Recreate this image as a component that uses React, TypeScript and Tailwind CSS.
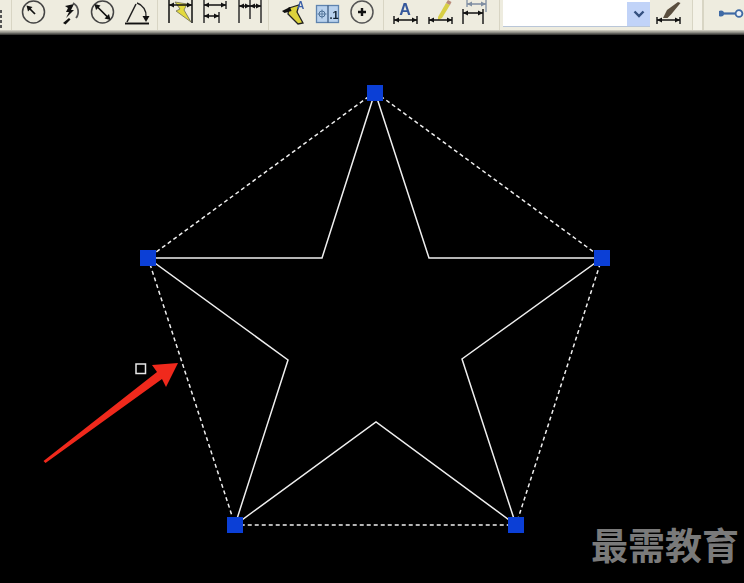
import type { ReactNode } from 'react';

// Each icon uses page x coordinates inside its viewBox, so the drawings can be read straight off the screenshot.
function Icon({ x, w, children }: { x: number; w: number; children: ReactNode }) {
  return (
    <svg width={w} height={30} viewBox={`${x} 0 ${w} 30`} className="shrink-0 blur-[0.35px]" fill="none">
      {children}
    </svg>
  );
}

function Sep({ width = 'w-[3px]' }: { width?: string }) {
  return <div className={`${width} h-full shrink-0 border-l border-[#d8d5c4] border-r-white`} />;
}

function Dim({ x1, x2, y, color = '#111' }: { x1: number; x2: number; y: number; color?: string }) {
  return (
    <g>
      <path d={`M${x1} ${y}H${x2}`} stroke={color} strokeWidth="1.5" />
      <path d={`M${x1} ${y}l5 -2.5v5zM${x2} ${y}l-5 -2.5v5z`} fill={color} />
    </g>
  );
}

function CanvasDrawing() {
  const star = '375,92 429,258 602,258 462,359 516,525 376,422 235,525 288,360 148,258 322,258';
  const pentagon = '375,92 602,258 516,525 235,525 148,258';
  const handles = [
    [375, 93],
    [602, 258],
    [516, 525],
    [235, 525],
    [148, 258],
  ];
  return (
    <svg width={744} height={548} viewBox="0 35 744 548" className="block">
      <polygon points={pentagon} fill="none" stroke="#efefef" strokeWidth="1.5" strokeDasharray="4 3" />
      <polygon points={star} fill="none" stroke="#efefef" strokeWidth="1.5" />
      {handles.map(([x, y]) => (
        <rect key={`${x}-${y}`} x={x - 8} y={y - 8} width={16} height={16} fill="#0b3fd6" />
      ))}
      <rect x={136} y={364} width={9.5} height={9.5} fill="none" stroke="#e8e8e8" strokeWidth="1.5" />
      <polygon points="43.5,461 157,372 152,365 178,363 166,387 162,379 45.5,463" fill="#f0291c" />
    </svg>
  );
}

export default function App() {
  return (
    <div className="flex h-[583px] w-[744px] flex-col overflow-hidden bg-black font-['Liberation_Sans',sans-serif]">
      <div className="flex h-[30px] shrink-0 bg-[#eeecdf]">
        <div className="flex h-full w-[11px] shrink-0 flex-col gap-[2px] pt-[10px]">
          <div className="h-[3px] w-[2px] bg-[#555]" />
          <div className="h-[3px] w-[2px] bg-[#555]" />
          <div className="h-[3px] w-[2px] bg-[#555]" />
          <div className="h-[3px] w-[2px] bg-[#555]" />
        </div>
        <Sep />
        <Icon x={14} w={39}>
          <circle cx={33.5} cy={12} r={11} stroke="#444" strokeWidth="1.5" />
          <path d="M35 14L29 8" stroke="#111" strokeWidth="1.7" />
          <path d="M26.5 5.5l6 1.5-4.5 4.5z" fill="#111" />
        </Icon>
        <Icon x={53} w={33}>
          <path d="M73 3a10 10 0 0 1 3 15" stroke="#555" strokeWidth="1.8" />
          <path d="M65 6l9-2-3 6 3 0-8 8 3-6-3 0 2-4z" fill="#111" />
          <path d="M63 23l6-5 1.5 1.5-5 5z" fill="#111" />
        </Icon>
        <Icon x={86} w={34}>
          <circle cx={102.5} cy={12} r={11} stroke="#444" strokeWidth="1.5" />
          <path d="M96 5.5L109 18.5" stroke="#111" strokeWidth="1.7" />
          <path d="M94.5 4l6 1.5-4.5 4.5zM110.5 20l-6-1.5 4.5-4.5z" fill="#111" />
        </Icon>
        <Icon x={120} w={37}>
          <path d="M125 23.5H149" stroke="#111" strokeWidth="1.9" />
          <path d="M127 22L136 4" stroke="#222" strokeWidth="1.5" />
          <path d="M137 3a13 13 0 0 1 9 14" stroke="#222" strokeWidth="1.4" />
          <path d="M146 22l-3.5-6h7z" fill="#111" />
        </Icon>
        <Sep />
        <Icon x={160} w={37}>
          <path d="M169 0V23M192 0V23" stroke="#111" strokeWidth="1.5" />
          <path d="M175 2L187 4L184 10L191 22L176 11L180 9z" fill="#e3da3e" stroke="#6d6d55" strokeWidth="0.8" />
          <Dim x1={169} x2={192} y={5} />
        </Icon>
        <Icon x={197} w={35}>
          <path d="M204 0V23M226 1V9M219 12V23" stroke="#222" strokeWidth="1.4" />
          <Dim x1={204} x2={226} y={5} />
          <Dim x1={204} x2={219} y={16} />
        </Icon>
        <Icon x={232} w={36}>
          <path d="M239 0V23M250 0V19M261 0V23" stroke="#222" strokeWidth="1.4" />
          <Dim x1={239} x2={250} y={6} />
          <Dim x1={250} x2={261} y={6} />
        </Icon>
        <Sep width="w-[4px]" />
        <Icon x={272} w={39}>
          <path d="M289 8L299 5L297 12L303 23L298 24L288 14z" fill="#dcd23c" stroke="#222" strokeWidth="1.3" />
          <path d="M282 11l8-4 1.5 4-7 2z" fill="#111" />
          <text x={297} y={9} fontSize="10" fontWeight="700" fill="#3b5fa8" fontFamily="Liberation Sans">
            A
          </text>
        </Icon>
        <Icon x={311} w={34}>
          <rect x={316.5} y={5.5} width={22} height={17} fill="#b9d2ee" stroke="#5f84af" strokeWidth="1.3" />
          <path d="M328 5.5V22.5" stroke="#33527a" strokeWidth="1.2" />
          <circle cx={322} cy={14} r={3} stroke="#4d7096" />
          <path d="M322 9.5V18.5M317.5 14H326.5" stroke="#4d7096" strokeWidth="0.8" />
          <text x={329.5} y={19} fontSize="11" fontWeight="700" fill="#123" fontFamily="Liberation Sans">
            .1
          </text>
        </Icon>
        <Icon x={345} w={38}>
          <circle cx={362} cy={12} r={11} stroke="#555" strokeWidth="1.5" />
          <path d="M362 8V16M358 12H366" stroke="#111" strokeWidth="2.4" />
        </Icon>
        <Sep />
        <Icon x={386} w={37}>
          <text x={405} y={15} textAnchor="middle" fontSize="16" fontWeight="700" fill="#35589c" fontFamily="Liberation Sans">
            A
          </text>
          <path d="M394 16V24M417 16V24" stroke="#111" strokeWidth="1.4" />
          <Dim x1={394} x2={417} y={20} />
        </Icon>
        <Icon x={423} w={35}>
          <path d="M438 17l8-14 4 2-8 13-4 2z" fill="#d8cf45" />
          <path d="M446 3l4 2 1.5-3-3.5-2z" fill="#b98a7a" />
          <path d="M429 17V24M452 17V24" stroke="#111" strokeWidth="1.4" />
          <Dim x1={429} x2={452} y={20} />
        </Icon>
        <Icon x={458} w={41}>
          <path d="M467 0V7M486 0V12" stroke="#7f8ea2" strokeWidth="1.3" />
          <Dim x1={467} x2={486} y={4} color="#7f8ea2" />
          <path d="M463 9V24M483 9V24" stroke="#111" strokeWidth="1.4" />
          <Dim x1={463} x2={483} y={13} />
        </Icon>
        <Sep width="w-[4px]" />
        <div className="flex h-[27px] w-[147px] shrink-0 justify-end border-b border-[#b9c6d8] bg-white pt-[2px]">
          <div className="flex h-[24px] w-[23px] items-center justify-center bg-[#c1d3f8]">
            <svg width="12" height="8" viewBox="0 0 12 8" fill="none">
              <path d="M1.5 1.5L6 6L10.5 1.5" stroke="#34507f" strokeWidth="2.4" />
            </svg>
          </div>
        </div>
        <Icon x={650} w={42}>
          <path d="M663 18l4-8 11-8 2.5 1-9 11-4 4z" fill="#5a4e3e" />
          <path d="M657 17V24M680 17V24" stroke="#111" strokeWidth="1.4" />
          <Dim x1={657} x2={680} y={20} />
        </Icon>
        <div className="h-full w-[11px] shrink-0 border-x border-[#d8d5c4] bg-[#f4f2e8]" />
        <div className="h-full w-[16px] shrink-0 border-l border-[#d8d5c4]" />
        <Icon x={719} w={25}>
          <circle cx={721} cy={13.5} r={3} fill="#3f6aa5" />
          <path d="M723 13.5H736" stroke="#3f6aa5" strokeWidth="2.2" />
          <circle cx={739} cy={13.5} r={3.4} fill="#eef2f7" stroke="#3f6aa5" strokeWidth="1.8" />
        </Icon>
      </div>
      <div className="h-[5px] shrink-0 bg-gradient-to-b from-[#d9d7ca] via-[#8d8c84] to-[#2a2a28]" />
      <div className="relative flex-1">
        <CanvasDrawing />
        <div className="absolute left-[591px] top-[486px] font-['Noto_Sans_CJK_SC',sans-serif] text-[37px] font-bold leading-[46px] text-[#7a7a7a]">
          最需教育
        </div>
      </div>
    </div>
  );
}
